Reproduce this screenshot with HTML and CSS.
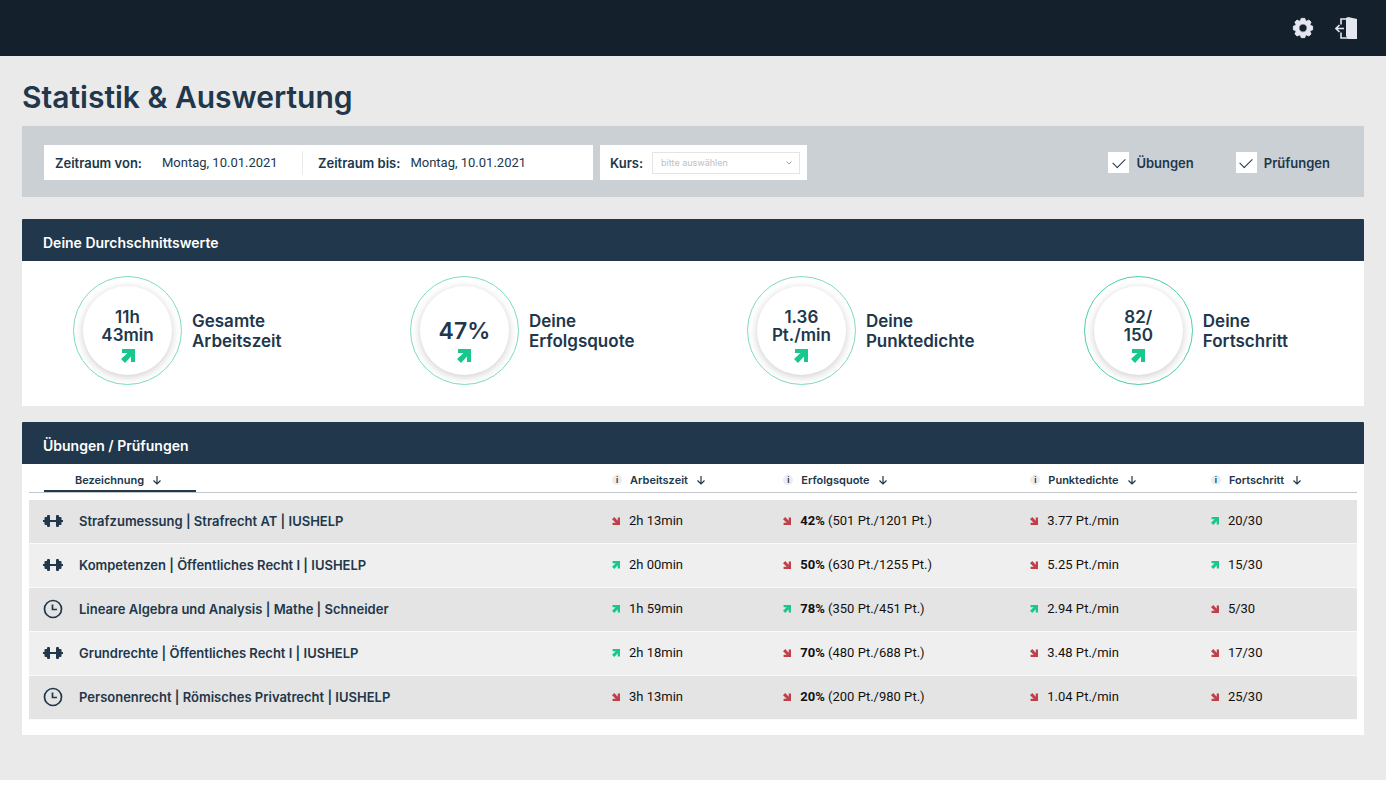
FILE: index.html
```html
<!DOCTYPE html>
<html lang="de">
<head>
  <meta charset="UTF-8">
  <meta name="viewport" content="width=device-width, initial-scale=1.0">
  <title>Statistik &amp; Auswertung</title>
  <link rel="stylesheet" href="styles.css">
</head>
<body>
  <!-- Icons -->
  <svg class="sprite" aria-hidden="true">
    <symbol id="icon-trend" viewBox="0 0 14 14">
      <path d="M1 0H14V13H10V7.500L4 14L0 10L6.500 4H1Z"/>
    </symbol>
    <symbol id="icon-sort" viewBox="0 0 10 10">
      <path d="M5 1V9M1.500 5.500L5 9L8.500 5.500" fill="none" stroke="currentColor" stroke-width="1.200"/>
    </symbol>
    <symbol id="icon-dumbbell" viewBox="0 0 20 14">
      <path d="M0 6H20V8H0Z"/>
      <rect x="1.500" y="3" width="3.500" height="8" rx="1"/>
      <rect x="4" y="1" width="3" height="12" rx="1"/>
      <rect x="13" y="1" width="3" height="12" rx="1"/>
      <rect x="15" y="3" width="3.500" height="8" rx="1"/>
    </symbol>
    <symbol id="icon-clock" viewBox="0 0 20 20">
      <circle cx="10" cy="10" r="8.500" fill="none" stroke="currentColor" stroke-width="1.700"/>
      <path d="M9.500 5.500V10.500H14" fill="none" stroke="currentColor" stroke-width="1.700"/>
    </symbol>
  </svg>

  <div class="page">
    <header class="topbar">
      <button class="icon-button" aria-label="Einstellungen">
        <svg width="22" height="22" viewBox="0 0 24 24"><path fill="currentColor" stroke="currentColor" stroke-linejoin="round" fill-rule="evenodd" d="M10 1.500h4l.6 2.300 1.600.7L18.500 3.300l2.300 2.300-1.200 2.200.7 1.600L22.500 10v4l-2.200.6-.7 1.600 1.200 2.300-2.300 2.300-2.300-1.200-1.600.7L14 22.500h-4l-.6-2.200-1.600-.7-2.300 1.200-2.300-2.300 1.200-2.300-.7-1.600L1.500 14v-4l2.200-.6.7-1.600-1.200-2.200L5.500 3.300l2.300 1.200 1.600-.7ZM12 7.500a4.500 4.500 0 1 0 0 9a4.500 4.500 0 1 0 0-9Z"/></svg>
      </button>
      <button class="icon-button" aria-label="Abmelden">
        <svg width="22" height="22" viewBox="0 0 22 22"><path fill="currentColor" d="M11 1L13 0L22 2V22H13L11 19Z"/><path fill="none" stroke="currentColor" stroke-width="1.600" d="M12 2H6V7.500M6 15.500V21H13M9 11.500H1M4.500 8L1 11.500L4.500 15"/></svg>
      </button>
    </header>

    <main class="content">
      <h1 class="title">Statistik &amp; Auswertung</h1>

      <form class="filter">
        <div class="filter-box filter-dates">
          <div class="date-field">
            <label for="from">Zeitraum von:</label>
            <input type="text" id="from" value="Montag, 10.01.2021">
          </div>
          <div class="date-field">
            <label for="to">Zeitraum bis:</label>
            <input type="text" id="to" value="Montag, 10.01.2021">
          </div>
        </div>
        <div class="filter-box filter-course">
          <label for="course">Kurs:</label>
          <div class="select-wrap">
            <select id="course">
              <option>bitte auswählen</option>
            </select>
            <svg class="chevron" width="6" height="4" viewBox="0 0 6 4"><path d="M0.500 0.500L3 3L5.500 0.500" fill="none" stroke="currentColor"/></svg>
          </div>
        </div>
        <div class="filter-checks">
          <label class="check"><input type="checkbox" checked>Übungen</label>
          <label class="check"><input type="checkbox" checked>Prüfungen</label>
        </div>
      </form>

      <section class="panel">
        <h2 class="panel-header">Deine Durchschnittswerte</h2>
        <div class="averages">
          <div class="average">
            <div class="ring"><div class="disc">11h<br>43min<svg class="trend"><use href="#icon-trend"/></svg></div></div>
            <p>Gesamte<br>Arbeitszeit</p>
          </div>
          <div class="average">
            <div class="ring"><div class="disc"><span class="big">47%</span><svg class="trend"><use href="#icon-trend"/></svg></div></div>
            <p>Deine<br>Erfolgsquote</p>
          </div>
          <div class="average">
            <div class="ring"><div class="disc">1.36<br>Pt./min<svg class="trend"><use href="#icon-trend"/></svg></div></div>
            <p>Deine<br>Punktedichte</p>
          </div>
          <div class="average">
            <div class="ring ring-strong"><div class="disc">82/<br>150<svg class="trend"><use href="#icon-trend"/></svg></div></div>
            <p>Deine<br>Fortschritt</p>
          </div>
        </div>
      </section>

      <section class="panel">
        <h2 class="panel-header">Übungen / Prüfungen</h2>
        <div class="table-wrap">
          <table class="results">
            <colgroup>
              <col class="col-name">
              <col class="col-time">
              <col class="col-quote">
              <col class="col-points">
              <col class="col-progress">
            </colgroup>
            <thead>
              <tr>
                <th><button class="sort active">Bezeichnung<svg><use href="#icon-sort"/></svg></button></th>
                <th><button class="sort"><span class="info">i</span>Arbeitszeit<svg><use href="#icon-sort"/></svg></button></th>
                <th><button class="sort"><span class="info">i</span>Erfolgsquote<svg><use href="#icon-sort"/></svg></button></th>
                <th><button class="sort"><span class="info">i</span>Punktedichte<svg><use href="#icon-sort"/></svg></button></th>
                <th><button class="sort"><span class="info">i</span>Fortschritt<svg><use href="#icon-sort"/></svg></button></th>
              </tr>
            </thead>
            <tbody>
              <tr>
                <td><div class="name"><svg><use href="#icon-dumbbell"/></svg>Strafzumessung | Strafrecht AT | IUSHELP</div></td>
                <td><div class="value"><svg class="down"><use href="#icon-trend"/></svg>2h 13min</div></td>
                <td><div class="value"><svg class="down"><use href="#icon-trend"/></svg><span><b>42%</b> (501 Pt./1201 Pt.)</span></div></td>
                <td><div class="value"><svg class="down"><use href="#icon-trend"/></svg>3.77 Pt./min</div></td>
                <td><div class="value"><svg class="up"><use href="#icon-trend"/></svg>20/30</div></td>
              </tr>
              <tr>
                <td><div class="name"><svg><use href="#icon-dumbbell"/></svg>Kompetenzen | Öffentliches Recht I | IUSHELP</div></td>
                <td><div class="value"><svg class="up"><use href="#icon-trend"/></svg>2h 00min</div></td>
                <td><div class="value"><svg class="down"><use href="#icon-trend"/></svg><span><b>50%</b> (630 Pt./1255 Pt.)</span></div></td>
                <td><div class="value"><svg class="down"><use href="#icon-trend"/></svg>5.25 Pt./min</div></td>
                <td><div class="value"><svg class="up"><use href="#icon-trend"/></svg>15/30</div></td>
              </tr>
              <tr>
                <td><div class="name"><svg><use href="#icon-clock"/></svg>Lineare Algebra und Analysis | Mathe | Schneider</div></td>
                <td><div class="value"><svg class="up"><use href="#icon-trend"/></svg>1h 59min</div></td>
                <td><div class="value"><svg class="up"><use href="#icon-trend"/></svg><span><b>78%</b> (350 Pt./451 Pt.)</span></div></td>
                <td><div class="value"><svg class="up"><use href="#icon-trend"/></svg>2.94 Pt./min</div></td>
                <td><div class="value"><svg class="down"><use href="#icon-trend"/></svg>5/30</div></td>
              </tr>
              <tr>
                <td><div class="name"><svg><use href="#icon-dumbbell"/></svg>Grundrechte | Öffentliches Recht I | IUSHELP</div></td>
                <td><div class="value"><svg class="up"><use href="#icon-trend"/></svg>2h 18min</div></td>
                <td><div class="value"><svg class="down"><use href="#icon-trend"/></svg><span><b>70%</b> (480 Pt./688 Pt.)</span></div></td>
                <td><div class="value"><svg class="down"><use href="#icon-trend"/></svg>3.48 Pt./min</div></td>
                <td><div class="value"><svg class="down"><use href="#icon-trend"/></svg>17/30</div></td>
              </tr>
              <tr>
                <td><div class="name"><svg><use href="#icon-clock"/></svg>Personenrecht | Römisches Privatrecht | IUSHELP</div></td>
                <td><div class="value"><svg class="down"><use href="#icon-trend"/></svg>3h 13min</div></td>
                <td><div class="value"><svg class="down"><use href="#icon-trend"/></svg><span><b>20%</b> (200 Pt./980 Pt.)</span></div></td>
                <td><div class="value"><svg class="down"><use href="#icon-trend"/></svg>1.04 Pt./min</div></td>
                <td><div class="value"><svg class="down"><use href="#icon-trend"/></svg>25/30</div></td>
              </tr>
            </tbody>
          </table>
        </div>
      </section>
    </main>
  </div>
</body>
</html>
```
FILE: styles.css
```css
* {
  box-sizing: border-box;
}

body {
  margin: 0;
  background-color: #fff;
  color: #21374b;
  font-family: Inter, "Liberation Sans", sans-serif;
  font-size: 13px;
}

h1, h2, p {
  margin: 0;
}

button, input, select {
  font: inherit;
  color: inherit;
}

button {
  padding: 0;
  border: none;
  background: none;
  cursor: pointer;
}

.sprite {
  display: none;
}

.page {
  min-height: calc(100vh - 5px);
  margin: 0 4px 5px 0;
  background-color: #eaeaea;
}

/* Top bar */
.topbar {
  display: flex;
  justify-content: flex-end;
  align-items: center;
  gap: 21px;
  height: 56px;
  padding: 0 29px 1px;
  background-color: #14202c;
}

.icon-button {
  display: flex;
  color: #e4e7f0;
}

.content {
  padding: 21px 22px 45px;
}

.title {
  margin-bottom: 9px;
  font-size: 30px;
  font-weight: 600;
  line-height: 40px;
}

/* Filter */
.filter {
  display: flex;
  align-items: center;
  gap: 7px;
  height: 71px;
  margin-bottom: 22px;
  padding: 2px 34px 0 22px;
  background-color: #cbd0d4;
}

.filter label {
  font-weight: 600;
}

.filter-box {
  display: flex;
  align-items: center;
  height: 35px;
  background-color: #fff;
}

.filter-dates {
  width: 549px;
}

.date-field {
  display: flex;
  align-items: center;
  gap: 10px;
  height: 24px;
  padding-left: 15px;
}

.date-field:first-child {
  width: 259px;
  gap: 20px;
  padding-left: 11px;
  border-right: 1px solid #eaeaea;
}

.date-field input {
  width: 130px;
  padding: 0;
  border: none;
  background: none;
  font-family: Roboto, "Liberation Sans", sans-serif;
}

.filter-course {
  width: 207px;
  gap: 9px;
  padding: 0 7px 0 10px;
}

.select-wrap {
  position: relative;
  flex: 1;
}

.select-wrap select {
  display: block;
  width: 100%;
  height: 22px;
  padding: 0 8px;
  border: 1px solid #e4e4e4;
  border-radius: 0;
  background: #fff;
  color: #c0c0c0;
  font-size: 9px;
  appearance: none;
}

.chevron {
  position: absolute;
  top: 9px;
  right: 8px;
  color: #a0a0a0;
}

.filter-checks {
  display: flex;
  gap: 42px;
  margin-left: auto;
}

.check {
  display: flex;
  align-items: center;
  gap: 7px;
}

.check input {
  display: grid;
  place-items: center;
  width: 21px;
  height: 21px;
  margin: 0;
  background-color: #fff;
  appearance: none;
}

.check input:checked::before {
  content: "";
  width: 11px;
  height: 6px;
  margin-bottom: 3px;
  border: solid #21374b;
  border-width: 0 0 1px 1px;
  transform: rotate(-45deg);
}

/* Panels */
.panel {
  margin-bottom: 16px;
  background-color: #fff;
}

.panel:last-child {
  margin-bottom: 0;
}

.panel-header {
  padding: 5px 21px 0;
  border-radius: 1px 1px 0 0;
  background-color: #21374b;
  color: #fff;
  font-size: 14px;
  font-weight: 600;
  line-height: 37px;
}

.averages {
  display: grid;
  grid-template-columns: repeat(3, 26.1%) auto;
  padding: 15px 0 21px 51px;
}

.average {
  display: flex;
  align-items: center;
  gap: 10px;
  font-size: 17px;
  font-weight: 600;
  line-height: 20px;
}

.ring {
  display: grid;
  place-items: center;
  flex: none;
  width: 109px;
  height: 109px;
  border: 1px solid #7fdcbc;
  border-radius: 50%;
}

.ring-strong {
  border-color: #4fcfa2;
}

.disc {
  display: flex;
  flex-direction: column;
  align-items: center;
  justify-content: flex-end;
  width: 89px;
  height: 89px;
  padding-bottom: 12px;
  border-radius: 50%;
  box-shadow: 0 2px 8px rgba(0, 0, 0, 0.2);
  font-size: 17px;
  line-height: 18px;
  text-align: center;
}

.big {
  font-size: 23px;
  line-height: 25px;
}

.trend {
  width: 14px;
  height: 14px;
  margin-top: 5px;
  fill: #18c78e;
}

/* Table */
.table-wrap {
  padding: 0 7px 15px;
}

.results {
  width: 100%;
  border-spacing: 0;
  table-layout: fixed;
}

.col-name { width: 43.9%; }
.col-time { width: 12.9%; }
.col-quote { width: 18.6%; }
.col-points { width: 13.6%; }
.col-progress { width: 11%; }

.results th {
  height: 28px;
  padding: 0;
  border-bottom: 1px solid #c3c7cc;
  text-align: left;
}

.sort {
  display: flex;
  align-items: center;
  gap: 8px;
  height: 28px;
  padding-top: 3px;
  font-size: 11px;
  font-weight: 600;
}

.sort svg {
  width: 10px;
  height: 10px;
}

.sort.active {
  width: 152px;
  margin-left: 15px;
  padding: 5px 0 0 31px;
  border-bottom: 2px solid #21374b;
}

.info {
  width: 10px;
  height: 10px;
  border-radius: 50%;
  background-color: #ececee;
  font-size: 8px;
  font-weight: 700;
  line-height: 10px;
  text-align: center;
}

.results td {
  height: 44px;
  padding: 0 0 2px;
  border-bottom: 1px solid #fafafa;
  background-color: #efefef;
}

.results tbody tr:nth-child(odd) td {
  background-color: #e4e4e4;
}

.results tbody tr:first-child td {
  height: 51px;
  border-top: 7px solid #fff;
}

.name {
  display: flex;
  align-items: center;
  gap: 16px;
  padding-left: 14px;
  font-weight: 600;
}

.name svg {
  width: 20px;
  height: 20px;
  fill: #21374b;
}

.value {
  display: flex;
  align-items: center;
  gap: 9px;
  color: #111;
  font-family: Roboto, "Liberation Sans", sans-serif;
}

.value svg {
  width: 8px;
  height: 8px;
}

.up {
  fill: #18c78e;
}

.down {
  fill: #c0404a;
  transform: rotate(90deg);
}
```
